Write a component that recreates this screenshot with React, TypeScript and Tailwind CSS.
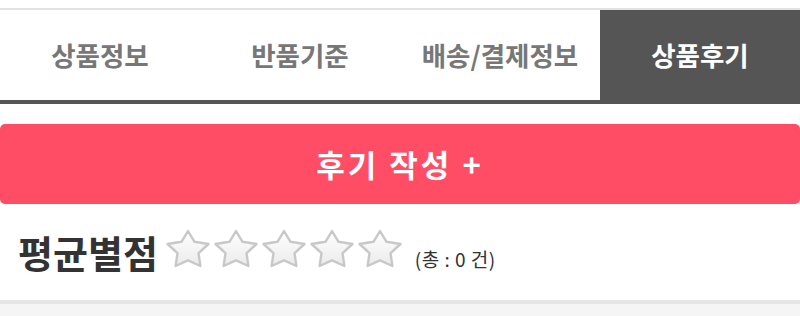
import React from 'react';

const tabs = ['상품정보', '반품기준', '배송/결제정보', '상품후기'];

function Star({ id }: { id: number }) {
  return (
    <svg width="46" height="40" viewBox="0 0 46 40" className="shrink-0">
      <defs>
        <linearGradient id={`sg${id}`} x1="0" y1="0" x2="0" y2="1">
          <stop offset="0%" stopColor="#ffffff" />
          <stop offset="100%" stopColor="#ebebeb" />
        </linearGradient>
        <filter id={`sb${id}`} x="-10%" y="-10%" width="120%" height="120%">
          <feGaussianBlur stdDeviation="0.7" />
        </filter>
      </defs>
      <path
        d="M23 2 L29.5 12.8 L43.5 15 L33.5 24.2 L35.4 37 L23 31.3 L10.6 37 L12.5 24.2 L2.5 15 L16.5 12.8 Z"
        fill={`url(#sg${id})`}
        stroke="#c8c8c8"
        strokeWidth="2.4"
        strokeLinejoin="round"
        filter={`url(#sb${id})`}
      />
    </svg>
  );
}

export default function App() {
  const active = 3;
  return (
    <div className="w-[800px] h-[316px] bg-white overflow-hidden" style={{ fontFamily: '"Noto Sans CJK KR", "Noto Sans", sans-serif' }}>
      {/* Tabs */}
      <div className="pt-2">
        <div className="flex border-t-2 border-[#e2e2e2] border-b-4 border-b-[#555555]">
          {tabs.map((t, i) => (
            <div
              key={t}
              className={`flex-1 h-[90px] flex items-center justify-center text-[26.5px] font-bold ${
                i === active ? 'bg-[#555555] text-white' : 'bg-white text-[#777777]'
              }`}
            >
              {t}
            </div>
          ))}
        </div>
      </div>

      {/* Write review */}
      <div className="mt-5">
        <button className="w-full h-[80px] rounded-[5px] bg-[#ff4d65] text-white text-[31px] font-bold flex items-center justify-center tracking-[3px]">
          후기 작성 +
        </button>
      </div>

      {/* Average rating */}
      <div className="h-[100px] flex items-center pl-[18px] border-b-4 border-[#e6e6e6]">
        <span className="text-[38px] font-bold text-[#333333] leading-none">평균별점</span>
        <div className="flex ml-[7px] gap-[2px] mb-[6px]">
          {[0, 1, 2, 3, 4].map((i) => (
            <Star key={i} id={i} />
          ))}
        </div>
        <span className="ml-[12px] mt-[14px] text-[19px] tracking-[0.5px] text-[#333333]">(총 : 0 건)</span>
      </div>
      <div className="h-[20px] bg-[#f5f5f5]" />
    </div>
  );
}
